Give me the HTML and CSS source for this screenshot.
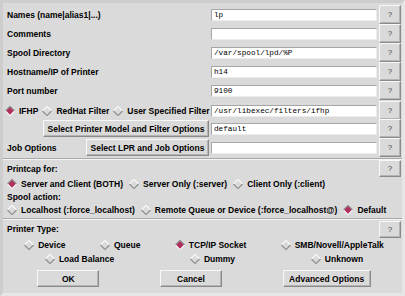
FILE: index.html
```html
<!DOCTYPE html>
<html lang="en">
<head>
    <meta charset="UTF-8">
    <title>Printer Configuration</title>
    <link rel="stylesheet" href="styles.css">
</head>
<body>
    <div class="window">
        <div class="frame entries">
            <span class="label">Names (name|alias1|...)</span>
            <div class="entry">lp</div>
            <button class="help">?</button>

            <span class="label">Comments</span>
            <div class="entry"></div>
            <button class="help">?</button>

            <span class="label">Spool Directory</span>
            <div class="entry">/var/spool/lpd/%P</div>
            <button class="help">?</button>

            <span class="label">Hostname/IP of Printer</span>
            <div class="entry">h14</div>
            <button class="help">?</button>

            <span class="label">Port number</span>
            <div class="entry">9100</div>
            <button class="help">?</button>

            <div class="radios filter-row">
                <span class="radio on"><svg viewBox="0 0 11 11"><polygon points="5.5,0.5 10.5,5.5 5.5,10.5 0.5,5.5" class="fill"/><polyline points="0.5,5.5 5.5,0.5 10.5,5.5" class="top"/><polyline points="10.5,5.5 5.5,10.5 0.5,5.5" class="bot"/></svg>IFHP</span>
                <span class="radio"><svg viewBox="0 0 11 11"><polygon points="5.5,0.5 10.5,5.5 5.5,10.5 0.5,5.5" class="fill"/><polyline points="0.5,5.5 5.5,0.5 10.5,5.5" class="top"/><polyline points="10.5,5.5 5.5,10.5 0.5,5.5" class="bot"/></svg>RedHat Filter</span>
                <span class="radio"><svg viewBox="0 0 11 11"><polygon points="5.5,0.5 10.5,5.5 5.5,10.5 0.5,5.5" class="fill"/><polyline points="0.5,5.5 5.5,0.5 10.5,5.5" class="top"/><polyline points="10.5,5.5 5.5,10.5 0.5,5.5" class="bot"/></svg>User Specified Filter</span>
            </div>
            <div class="entry filter-row">/usr/libexec/filters/ifhp</div>
            <button class="help filter-row">?</button>

            <div class="btn-cell"><button class="btn model">Select Printer Model and Filter Options</button></div>
            <div class="entry">default</div>
            <button class="help">?</button>

            <div class="btn-cell">
                <span class="label">Job Options</span>
                <button class="btn lpr">Select LPR and Job Options</button>
            </div>
            <div class="entry"></div>
            <button class="help">?</button>
        </div>

        <div class="frame printcap">
            <div class="head">
                <span class="label">Printcap for:</span>
                <button class="help">?</button>
            </div>
            <div class="radios packed">
                <span class="radio on"><svg viewBox="0 0 11 11"><polygon points="5.5,0.5 10.5,5.5 5.5,10.5 0.5,5.5" class="fill"/><polyline points="0.5,5.5 5.5,0.5 10.5,5.5" class="top"/><polyline points="10.5,5.5 5.5,10.5 0.5,5.5" class="bot"/></svg>Server and Client (BOTH)</span>
                <span class="radio"><svg viewBox="0 0 11 11"><polygon points="5.5,0.5 10.5,5.5 5.5,10.5 0.5,5.5" class="fill"/><polyline points="0.5,5.5 5.5,0.5 10.5,5.5" class="top"/><polyline points="10.5,5.5 5.5,10.5 0.5,5.5" class="bot"/></svg>Server Only (:server)</span>
                <span class="radio"><svg viewBox="0 0 11 11"><polygon points="5.5,0.5 10.5,5.5 5.5,10.5 0.5,5.5" class="fill"/><polyline points="0.5,5.5 5.5,0.5 10.5,5.5" class="top"/><polyline points="10.5,5.5 5.5,10.5 0.5,5.5" class="bot"/></svg>Client Only (:client)</span>
            </div>
            <span class="label sub">Spool action:</span>
            <div class="radios packed">
                <span class="radio"><svg viewBox="0 0 11 11"><polygon points="5.5,0.5 10.5,5.5 5.5,10.5 0.5,5.5" class="fill"/><polyline points="0.5,5.5 5.5,0.5 10.5,5.5" class="top"/><polyline points="10.5,5.5 5.5,10.5 0.5,5.5" class="bot"/></svg>Localhost (:force_localhost)</span>
                <span class="radio"><svg viewBox="0 0 11 11"><polygon points="5.5,0.5 10.5,5.5 5.5,10.5 0.5,5.5" class="fill"/><polyline points="0.5,5.5 5.5,0.5 10.5,5.5" class="top"/><polyline points="10.5,5.5 5.5,10.5 0.5,5.5" class="bot"/></svg>Remote Queue or Device (:force_localhost@)</span>
                <span class="radio on"><svg viewBox="0 0 11 11"><polygon points="5.5,0.5 10.5,5.5 5.5,10.5 0.5,5.5" class="fill"/><polyline points="0.5,5.5 5.5,0.5 10.5,5.5" class="top"/><polyline points="10.5,5.5 5.5,10.5 0.5,5.5" class="bot"/></svg>Default</span>
            </div>
        </div>

        <div class="frame ptype">
            <div class="head">
                <span class="label">Printer Type:</span>
                <button class="help">?</button>
            </div>
            <div class="radios spread">
                <span class="radio"><svg viewBox="0 0 11 11"><polygon points="5.5,0.5 10.5,5.5 5.5,10.5 0.5,5.5" class="fill"/><polyline points="0.5,5.5 5.5,0.5 10.5,5.5" class="top"/><polyline points="10.5,5.5 5.5,10.5 0.5,5.5" class="bot"/></svg>Device</span>
                <span class="radio"><svg viewBox="0 0 11 11"><polygon points="5.5,0.5 10.5,5.5 5.5,10.5 0.5,5.5" class="fill"/><polyline points="0.5,5.5 5.5,0.5 10.5,5.5" class="top"/><polyline points="10.5,5.5 5.5,10.5 0.5,5.5" class="bot"/></svg>Queue</span>
                <span class="radio on"><svg viewBox="0 0 11 11"><polygon points="5.5,0.5 10.5,5.5 5.5,10.5 0.5,5.5" class="fill"/><polyline points="0.5,5.5 5.5,0.5 10.5,5.5" class="top"/><polyline points="10.5,5.5 5.5,10.5 0.5,5.5" class="bot"/></svg>TCP/IP Socket</span>
                <span class="radio"><svg viewBox="0 0 11 11"><polygon points="5.5,0.5 10.5,5.5 5.5,10.5 0.5,5.5" class="fill"/><polyline points="0.5,5.5 5.5,0.5 10.5,5.5" class="top"/><polyline points="10.5,5.5 5.5,10.5 0.5,5.5" class="bot"/></svg>SMB/Novell/AppleTalk</span>
            </div>
            <div class="radios spread">
                <span class="radio"><svg viewBox="0 0 11 11"><polygon points="5.5,0.5 10.5,5.5 5.5,10.5 0.5,5.5" class="fill"/><polyline points="0.5,5.5 5.5,0.5 10.5,5.5" class="top"/><polyline points="10.5,5.5 5.5,10.5 0.5,5.5" class="bot"/></svg>Load Balance</span>
                <span class="radio"><svg viewBox="0 0 11 11"><polygon points="5.5,0.5 10.5,5.5 5.5,10.5 0.5,5.5" class="fill"/><polyline points="0.5,5.5 5.5,0.5 10.5,5.5" class="top"/><polyline points="10.5,5.5 5.5,10.5 0.5,5.5" class="bot"/></svg>Dummy</span>
                <span class="radio"><svg viewBox="0 0 11 11"><polygon points="5.5,0.5 10.5,5.5 5.5,10.5 0.5,5.5" class="fill"/><polyline points="0.5,5.5 5.5,0.5 10.5,5.5" class="top"/><polyline points="10.5,5.5 5.5,10.5 0.5,5.5" class="bot"/></svg>Unknown</span>
            </div>
            <div class="actions">
                <button class="btn action">OK</button>
                <button class="btn action">Cancel</button>
                <button class="btn action wide">Advanced Options</button>
            </div>
        </div>
    </div>
</body>
</html>
```

FILE: styles.css
```css
body {
    margin: 0;
    background: #dadada;
    font-family: "Liberation Sans", Arial, sans-serif;
    font-size: 8.5px;
    font-weight: bold;
    color: #000;
}
.window {
    width: 405px;
    height: 296px;
    box-sizing: border-box;
    border: 3px solid;
    border-color: #cdcdcd #e6e6e6 #e6e6e6 #cdcdcd;
    background: #dadada;
    overflow: hidden;
}
.frame {
    padding: 0 1px 0 4px;
}
.entries {
    display: grid;
    grid-template-columns: minmax(0, 1fr) 166px 22px;
    grid-auto-rows: 19px;
    column-gap: 2px;
    align-items: center;
    padding-top: 2px;
    padding-bottom: 1px;
}
.entries .filter-row {
    margin-top: 2px;
}
.label {
    white-space: nowrap;
}
.entry {
    height: 12px;
    box-sizing: border-box;
    background: #fff;
    border: 1px solid;
    border-color: #a6a6a6 #ececec #ececec #a6a6a6;
    font-family: "Liberation Mono", "Courier New", monospace;
    font-weight: normal;
    font-size: 7.7px;
    line-height: 10px;
    padding-left: 2px;
    white-space: nowrap;
}
.help {
    width: 22px;
    height: 19px;
    box-sizing: border-box;
    padding: 0;
    background: #dadada;
    border: 1px solid;
    border-color: #f8f8f8 #8a8a8a #8a8a8a #f8f8f8;
    box-shadow: inset -1px -1px 0 #b4b4b4;
    font-family: "Liberation Sans", Arial, sans-serif;
    font-size: 8px;
    font-weight: normal;
    color: #444;
}
.head .help {
    height: 17px;
}
.btn {
    box-sizing: border-box;
    height: 17px;
    padding: 0;
    background: #dadada;
    border: 1px solid;
    border-color: #f8f8f8 #8a8a8a #8a8a8a #f8f8f8;
    box-shadow: inset -1px -1px 0 #b4b4b4;
    font-family: inherit;
    font-size: 8.5px;
    font-weight: bold;
    color: #000;
    white-space: nowrap;
}
.btn-cell {
    display: flex;
    justify-content: space-between;
    align-items: center;
}
.btn.model {
    width: 166px;
    margin-left: auto;
}
.btn.lpr {
    width: 123px;
}
.radios {
    display: flex;
    align-items: center;
    white-space: nowrap;
}
.radio {
    display: inline-flex;
    align-items: center;
}
.radio svg {
    width: 10px;
    height: 10px;
    margin-right: 4px;
}
.radio .fill {
    fill: #dadada;
}
.radio .top {
    fill: none;
    stroke: #fbfbfb;
    stroke-width: 1.2;
}
.radio .bot {
    fill: none;
    stroke: #8a8a8a;
    stroke-width: 1.2;
}
.radio.on .fill {
    fill: #b03060;
}
.radio.on .top {
    stroke: #8a8a8a;
}
.radio.on .bot {
    stroke: #fbfbfb;
}
.filter-row.radios {
    margin-left: -2px;
    gap: 4px;
}
.printcap,
.ptype {
    border-top: 1px solid #a8a8a8;
    box-shadow: inset 0 1px 0 #f4f4f4;
}
.head {
    display: flex;
    justify-content: space-between;
    align-items: center;
    height: 17px;
    padding-top: 1px;
}
.packed {
    height: 14px;
    gap: 6px;
}
.sub {
    display: block;
    height: 12px;
    line-height: 12px;
}
.printcap {
    padding-bottom: 1px;
}
.ptype .head {
    height: 18px;
}
.spread {
    justify-content: space-around;
    height: 14px;
}
.actions {
    display: flex;
    justify-content: space-around;
    margin-top: 4px;
}
.btn.action {
    width: 62px;
    height: 17px;
}
.btn.action.wide {
    width: 88px;
}
```
